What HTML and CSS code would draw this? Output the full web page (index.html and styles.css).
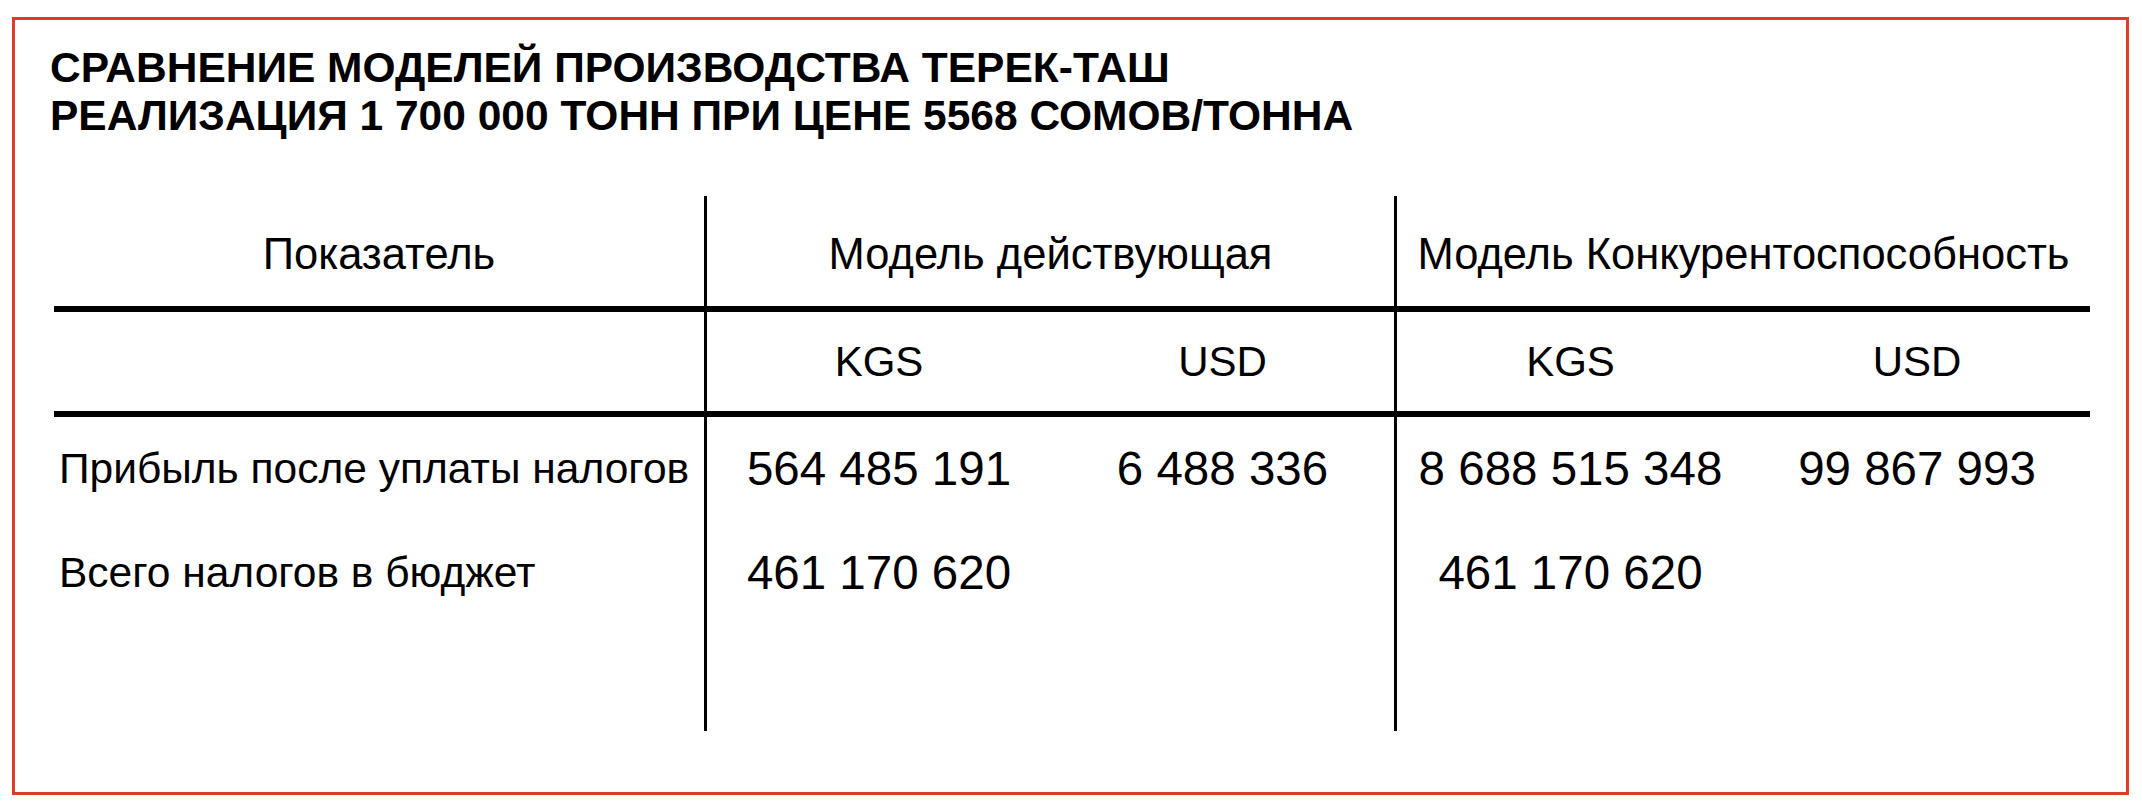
FILE: index.html
```html
<!DOCTYPE html>
<html lang="ru">
<head>
<meta charset="utf-8">
<title>Сравнение моделей производства Терек-Таш</title>
<link rel="stylesheet" href="styles.css">
</head>
<body>
<div class="frame">
  <h1 class="title">СРАВНЕНИЕ МОДЕЛЕЙ ПРОИЗВОДСТВА ТЕРЕК-ТАШ<br>РЕАЛИЗАЦИЯ 1 700 000 ТОНН ПРИ ЦЕНЕ 5568 СОМОВ/ТОННА</h1>
  <div class="table">
    <div class="vline v1"></div>
    <div class="vline v2"></div>

    <div class="cell head c1">Показатель</div>
    <div class="cell head c2">Модель действующая</div>
    <div class="cell head c3">Модель Конкурентоспособность</div>

    <div class="rule r1"></div>

    <div class="cell sub c1"></div>
    <div class="cell sub c2a">KGS</div>
    <div class="cell sub c2b">USD</div>
    <div class="cell sub c3a">KGS</div>
    <div class="cell sub c3b">USD</div>

    <div class="rule r2"></div>

    <div class="cell data label c1 row1">Прибыль после уплаты налогов</div>
    <div class="cell data num c2a row1">564 485 191</div>
    <div class="cell data num c2b row1">6 488 336</div>
    <div class="cell data num c3a row1">8 688 515 348</div>
    <div class="cell data num c3b row1">99 867 993</div>

    <div class="cell data label c1 row2">Всего налогов в бюджет</div>
    <div class="cell data num c2a row2">461 170 620</div>
    <div class="cell data num c3a row2">461 170 620</div>
  </div>
</div>
</body>
</html>
```

FILE: styles.css
```css
html, body {
  margin: 0;
  padding: 0;
  background: #ffffff;
}

body {
  font-family: "Liberation Sans", Arial, Helvetica, sans-serif;
  color: #000000;
}

.frame {
  box-sizing: border-box;
  margin: 17px 0 0 12px;
  width: 2117px;
  height: 778px;
  border: 3px solid #dd3d27;
  padding: 24px 0 0 35px;
}

.title {
  margin: 0;
  font-size: 42.5px;
  line-height: 48px;
  font-weight: 700;
}

.table {
  margin: 56px 0 0 4px;
  display: grid;
  grid-template-columns: 650px 3px 344px 343px 3px 347px 346px;
  grid-template-rows: 110px 6px 99px 6px 104px 104px 106px;
}

.vline {
  background: #000;
  grid-row: 1 / -1;
}
.v1 { grid-column: 2; }
.v2 { grid-column: 5; }

.rule {
  background: #000;
  grid-column: 1 / -1;
}
.r1 { grid-row: 2; }
.r2 { grid-row: 4; }

.cell {
  white-space: nowrap;
  text-align: center;
}

.head {
  grid-row: 1;
  font-size: 43.5px;
  line-height: 48px;
  padding-top: 34px;
}
.head.c1 { grid-column: 1; }
.head.c2 { grid-column: 3 / 5; }
.head.c3 { grid-column: 6 / 8; }

.sub {
  grid-row: 3;
  font-size: 42px;
  line-height: 48px;
  padding-top: 26px;
}

.c1 { grid-column: 1; }
.c2a { grid-column: 3; }
.c2b { grid-column: 4; }
.c3a { grid-column: 6; }
.c3b { grid-column: 7; }

.data {
  line-height: 52px;
  padding-top: 26px;
}
.row1 { grid-row: 5; }
.row2 { grid-row: 6; }

.label {
  font-size: 42.5px;
  text-align: left;
  padding-left: 5px;
}

.num {
  font-size: 47.5px;
}
```
